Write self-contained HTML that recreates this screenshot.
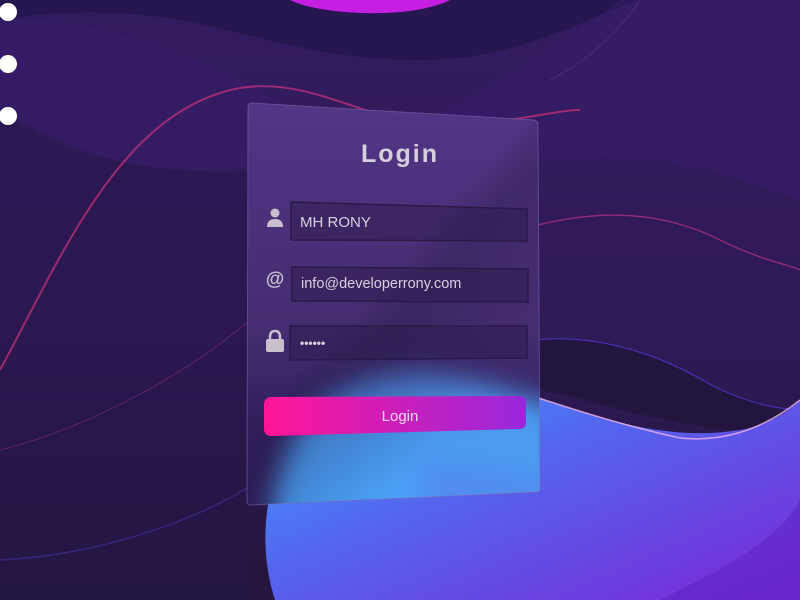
<!DOCTYPE html>
<html><head><meta charset="utf-8"><style>
html,body{margin:0;padding:0;width:800px;height:600px;overflow:hidden;background:#2e1a5a}
svg{display:block}
text{font-family:"Liberation Sans",sans-serif}
</style></head><body>
<svg width="800" height="600" viewBox="0 0 800 600" xmlns="http://www.w3.org/2000/svg">
<defs>
<linearGradient id="bg" x1="0" y1="0" x2="0" y2="1">
<stop offset="0" stop-color="#321c60"/><stop offset="0.5" stop-color="#2f1a58"/><stop offset="1" stop-color="#24163e"/></linearGradient>
<linearGradient id="blob" x1="0" y1="0" x2="1" y2="1">
<stop offset="0" stop-color="#3aa6ff"/><stop offset="0.45" stop-color="#5464ee"/><stop offset="1" stop-color="#7a26d6"/></linearGradient>
<linearGradient id="btn" x1="0" y1="0" x2="1" y2="0">
<stop offset="0" stop-color="#ff1596"/><stop offset="1" stop-color="#9828dc"/></linearGradient>
<linearGradient id="card" x1="0" y1="0" x2="0" y2="1">
<stop offset="0" stop-color="#563a8c" stop-opacity="0.9"/><stop offset="0.55" stop-color="#4a3278" stop-opacity="0.8"/><stop offset="0.75" stop-color="#4a3a80" stop-opacity="0.15"/><stop offset="1" stop-color="#5a5aa0" stop-opacity="0.05"/></linearGradient>
<linearGradient id="diag" x1="0" y1="0" x2="1" y2="1">
<stop offset="0" stop-color="#000" stop-opacity="0"/><stop offset="0.45" stop-color="#000" stop-opacity="0"/><stop offset="0.52" stop-color="#1a1035" stop-opacity="0.25"/><stop offset="0.7" stop-color="#1a1035" stop-opacity="0"/></linearGradient>
<clipPath id="cc"><path d="M252,103 L534,120 Q538,121 538,125 L540,488 Q540,492 536,492 L251,505 Q247,505 247,501 L248,107 Q248,103 252,103Z"/></clipPath>
<filter id="bl" x="-20%" y="-20%" width="140%" height="140%"><feGaussianBlur stdDeviation="13"/></filter>
</defs>
<rect width="800" height="600" fill="url(#bg)"/>
<path d="M0,20 C60,10 120,10 180,20 C260,35 320,60 420,60 C520,60 580,20 640,0 L800,0 L800,0 L0,0Z" fill="#261650"/>
<path d="M0,110 C40,130 90,160 160,168 C260,175 320,160 400,130 C470,100 540,60 620,0 L800,0 L800,200 C720,170 640,150 560,160 C480,170 380,150 300,110 C220,70 120,15 0,20Z" fill="#3a2070" opacity="0.35"/>
<path d="M0,110 C40,140 90,160 160,168 C230,175 250,170 248,170 L248,600 L0,600Z" fill="#251648" opacity="0.45"/>
<path d="M290,0 C320,15 410,20 450,0Z" fill="#c41ee0"/>
<path d="M0,370 C60,260 120,110 240,88 C320,75 380,135 470,125 C520,120 560,110 580,110" fill="none" stroke="#d0307a" stroke-width="2" opacity="0.7"/>
<path d="M538,225 C600,210 660,210 720,240 C760,260 790,265 800,270" fill="none" stroke="#b83080" stroke-width="1.5" opacity="0.7"/>
<path d="M540,340 C600,335 660,355 710,385 C750,405 780,410 800,410" fill="none" stroke="#4a30c8" stroke-width="2"/>
<path d="M540,340 C600,335 660,355 710,385 C750,405 780,410 800,410 L800,430 C700,440 600,400 540,390Z" fill="#22163e"/>
<path d="M0,560 C100,555 200,520 260,480" fill="none" stroke="#4030a0" stroke-width="1.5" opacity="0.6"/>
<path d="M0,450 C80,430 180,380 250,320" fill="none" stroke="#9a3080" stroke-width="1" opacity="0.5"/>
<path d="M550,80 C590,60 620,30 640,0" fill="none" stroke="#5a3a90" stroke-width="1" opacity="0.5"/>
<path d="M275,600 C262,560 258,500 290,440 C320,385 380,360 440,370 C490,378 520,392 560,405 C620,425 680,440 740,430 C770,425 790,410 800,400 L800,600Z" fill="url(#blob)"/>
<path d="M660,600 C720,570 780,540 800,500 L800,600Z" fill="#5a22c0" opacity="0.5"/>
<path d="M520,392 C560,405 620,425 680,438 C720,442 760,432 800,400" fill="none" stroke="#f0b0e8" stroke-width="1.5" opacity="0.8"/>
<circle cx="8" cy="12" r="9" fill="#fff"/><circle cx="8" cy="64" r="9" fill="#fff"/><circle cx="8" cy="116" r="9" fill="#fff"/>
<g clip-path="url(#cc)">
<rect x="200" y="80" width="400" height="450" fill="#2e1a58"/>
<path d="M285,620 C268,560 262,500 292,440 C322,385 380,362 440,372 C490,380 520,392 560,405 L580,620Z" fill="#4aa8ff" filter="url(#bl)"/>
<path d="M420,600 L420,460 C460,465 520,470 600,480 L600,600Z" fill="#5a80f0" opacity="0.5" filter="url(#bl)"/>
<rect x="200" y="80" width="400" height="450" fill="url(#card)"/>
<rect x="200" y="80" width="400" height="450" fill="url(#diag)"/>
</g>
<path d="M252,103 L534,120 Q538,121 538,125 L540,488 Q540,492 536,492 L251,505 Q247,505 247,501 L248,107 Q248,103 252,103Z" fill="none" stroke="#8a70b8" stroke-opacity="0.5" stroke-width="1"/>
<text x="400" y="162" text-anchor="middle" font-size="25" font-weight="bold" fill="#d6cfdc" letter-spacing="2">Login</text>
<path d="M291,202 L527,209 L527,241 L291,240Z" fill="#2a1a48" fill-opacity="0.45" stroke="#2a1a48" stroke-width="1.5"/>
<path d="M292,267 L528,269 L528,302 L292,301Z" fill="#2a1a48" fill-opacity="0.45" stroke="#2a1a48" stroke-width="1.5"/>
<path d="M290,326 L527,326 L527,358 L290,360Z" fill="#2a1a48" fill-opacity="0.45" stroke="#2a1a48" stroke-width="1.5"/>
<text x="300" y="227" font-size="15" fill="#d8d0e0">MH RONY</text>
<text x="301" y="288" font-size="14.5" fill="#d8d0e0">info@developerrony.com</text>
<text x="300" y="347" font-size="12" fill="#d8d0e0" font-weight="bold">••••••</text>
<circle cx="275" cy="213" r="4.5" fill="#c8c0cc"/>
<path d="M267,227 Q267,219 275,219 Q283,219 283,227Z" fill="#c8c0cc"/>
<text x="275" y="285" text-anchor="middle" font-size="19" font-weight="bold" fill="#c8c0cc">@</text>
<path d="M270,341 L270,337 Q270,331 275,331 Q280,331 280,337 L280,341" fill="none" stroke="#c8c0cc" stroke-width="2.5"/>
<rect x="266" y="339" width="18" height="13" rx="2" fill="#c8c0cc"/>
<path d="M272,397 L519,396 Q526,396 526,403 L526,422 Q526,429 519,429 L272,436 Q264,436 264,429 L264,405 Q264,397 272,397Z" fill="url(#btn)"/>
<text x="400" y="421" text-anchor="middle" font-size="15" fill="#f0d8f0">Login</text>
</svg>
</body></html>
